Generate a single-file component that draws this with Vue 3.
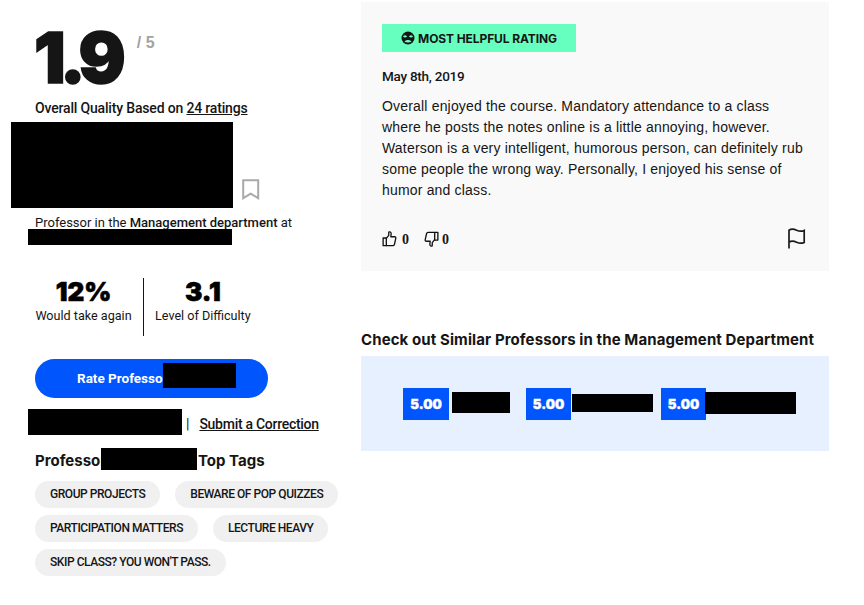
<script setup>
const paragraph = 'Overall enjoyed the course. Mandatory attendance to a class where he posts the notes online is a little annoying, however. Waterson is a very intelligent, humorous person, can definitely rub some people the wrong way. Personally, I enjoyed his sense of humor and class.'

const tags = [
  'GROUP PROJECTS',
  'BEWARE OF POP QUIZZES',
  'PARTICIPATION MATTERS',
  'LECTURE HEAVY',
  "SKIP CLASS? YOU WON'T PASS."
]

const similar = [
  { score: '5.00', scoreWidth: 46, left: 0, width: 58, height: 21, gap: 3 },
  { score: '5.00', scoreWidth: 45, left: 16, width: 81, height: 18, gap: 1 },
  { score: '5.00', scoreWidth: 45, left: 8, width: 91, height: 22, gap: -1 }
]
</script>

<template>
  <div class="page">
    <div class="left">
      <div class="score">
        <span class="score-big">1.9</span>
        <span class="score-max">/ 5</span>
      </div>
      <div class="overall">Overall Quality Based on <a class="link">24 ratings</a></div>

      <div class="name-row">
        <div class="black name-black"></div>
        <svg class="bookmark" width="18" height="21" viewBox="0 0 18 21" fill="none">
          <path d="M1.2 1.2h15v18l-7.5-4.6-7.5 4.6z" stroke="#a9a9a9" stroke-width="2" />
        </svg>
      </div>

      <div class="dept">Professor in the <b>Management department</b> at</div>
      <div class="black school-black"></div>

      <div class="stats">
        <div class="stat first">
          <div class="stat-num">12%</div>
          <div class="stat-label">Would take again</div>
        </div>
        <div class="stat second">
          <div class="stat-num">3.1</div>
          <div class="stat-label">Level of Difficulty</div>
        </div>
      </div>

      <div class="rate-btn">
        <span>Rate Professor</span>
        <div class="black rate-black"></div>
      </div>

      <div class="links">
        <div class="black compare-black"></div>
        <span class="sep">|</span>
        <a class="link correction">Submit a Correction</a>
      </div>

      <div class="tags-title">
        <span>Professor</span>
        <div class="black tags-black"></div>
        <span class="tags-rest">Top Tags</span>
      </div>
      <div class="tags">
        <span v-for="tag in tags" :key="tag" class="tag">{{ tag }}</span>
      </div>
    </div>

    <div class="right">
      <div class="rating-card">
        <div class="badge">
          <svg width="14" height="14" viewBox="0 0 14 14">
            <circle cx="7" cy="7" r="6.5" fill="#151515" />
            <path d="M2 5.4c1-1.6 3-1.6 4 0-.8 1.3-3.1 1.4-4 0zM8 5.4c1-1.6 3-1.6 4 0-.9 1.4-3.2 1.3-4 0z" fill="#66ffbf" />
            <path d="M3.4 10.8c1.5-2.4 5.7-2.4 7.2 0-2 1-5.2 1-7.2 0z" fill="#66ffbf" />
          </svg>
          <span>MOST HELPFUL RATING</span>
        </div>
        <div class="date">May 8th, 2019</div>
        <p class="comment">{{ paragraph }}</p>
        <div class="card-foot">
          <svg class="thumb" width="15" height="16" viewBox="0 0 16 17" fill="none" stroke="#111" stroke-width="1.4" stroke-linejoin="round">
            <path d="M4.6 7.4v8.2H1.2V7.4z" />
            <path d="M4.6 7.8 7.2 4.6V1.5c0-.9 2.4-.9 2.6 1.1l-.4 3.5h4c1 0 1.5.8 1.3 1.7l-1.4 6.3c-.2.8-.7 1.5-1.6 1.5H4.6" />
          </svg>
          <span class="count">0</span>
          <svg class="thumb down" width="15" height="16" viewBox="0 0 16 17" fill="none" stroke="#111" stroke-width="1.4" stroke-linejoin="round">
            <path d="M11.4 9.6V1.4h3.4v8.2z" />
            <path d="M11.4 9.2 8.8 12.4v3.1c0 .9-2.4.9-2.6-1.1l.4-3.5h-4c-1 0-1.5-.8-1.3-1.7l1.4-6.3c.2-.8.7-1.5 1.6-1.5h7.1" />
          </svg>
          <span class="count second-count">0</span>
          <svg class="flag" width="20" height="21" viewBox="0 0 20 21" fill="none" stroke="#1a1a1a" stroke-width="1.7">
            <path d="M2 20.5V2.2c2.4-1.6 5-1.2 7.6 0 2.6 1.2 5 1.4 7.6.2v12c-2.6 1.2-5 1-7.6-.2-2.6-1.2-5.2-1.6-7.6 0" />
          </svg>
        </div>
      </div>

      <h3 class="similar-title">Check out Similar Professors in the Management Department</h3>
      <div class="similar">
        <div
          v-for="(item, i) in similar"
          :key="i"
          class="similar-item"
          :style="{ marginLeft: item.left + 'px' }"
        >
          <div class="similar-score" :style="{ width: item.scoreWidth + 'px' }">{{ item.score }}</div>
          <div
            class="black similar-black"
            :style="{ width: item.width + 'px', height: item.height + 'px', marginLeft: item.gap + 'px' }"
          ></div>
        </div>
      </div>
    </div>
  </div>
</template>

<style>
html, body {
  margin: 0;
  background: #fff;
}
</style>

<style scoped>
.page {
  display: flex;
  width: 864px;
  height: 605px;
  overflow: hidden;
  font-family: "Liberation Sans", Arial, sans-serif;
  color: #151515;
}

.black {
  background: #000;
}

.left {
  width: 361px;
  padding-left: 35px;
  box-sizing: border-box;
  flex-shrink: 0;
  font-family: Roboto, sans-serif;
}

.score {
  display: flex;
  height: 100px;
}

.score-big {
  margin-left: -1px;
  font-family: Inter, sans-serif;
  font-weight: 900;
  font-size: 70px;
  line-height: 116px;
  letter-spacing: -6px;
  -webkit-text-stroke: 1.6px #151515;
  color: #151515;
}

.score-max {
  margin: 35px 0 0 17px;
  font-family: "Liberation Sans", Arial, sans-serif;
  font-size: 16px;
  font-weight: 700;
  line-height: 16px;
  color: #a3a3a3;
}

.overall {
  font-size: 14px;
  font-weight: 500;
  letter-spacing: -0.17px;
  line-height: 16px;
}

.link {
  text-decoration: underline;
  color: #151515;
}

.name-row {
  display: flex;
  align-items: flex-end;
  margin: 6px 0 0 -24px;
}

.name-black {
  width: 222px;
  height: 86px;
}

.bookmark {
  margin: 0 0 8px 9px;
}

.dept {
  margin-top: 7px;
  font-size: 13px;
  line-height: 16px;
}

.dept b {
  font-weight: 500;
}

.school-black {
  width: 204px;
  height: 16px;
  margin: -2px 0 0 -7px;
  position: relative;
}

.stats {
  display: flex;
  margin-top: 33px;
  height: 58px;
}

.stat {
  text-align: center;
  white-space: nowrap;
}

.stat.first {
  width: 109px;
  border-right: 1px solid #151515;
  padding-right: 11px;
  box-sizing: border-box;
}

.stat.second {
  padding-left: 11px;
}

.stat-num {
  font-family: Inter, sans-serif;
  font-weight: 900;
  font-size: 26px;
  line-height: 28px;
  -webkit-text-stroke: 0.6px #000;
  color: #000;
}

.stat-label {
  margin-top: 1px;
  font-size: 12.6px;
  line-height: 18px;
}

.rate-btn {
  position: relative;
  width: 233px;
  height: 39px;
  margin-top: 23px;
  padding-left: 42px;
  box-sizing: border-box;
  border-radius: 20px;
  background: #0055fd;
  color: #fff;
  font-size: 13.5px;
  font-weight: 700;
  line-height: 38px;
}

.rate-black {
  position: absolute;
  left: 128px;
  top: 4px;
  width: 73px;
  height: 25px;
}

.links {
  display: flex;
  align-items: center;
  margin: 11px 0 0 -7px;
}

.compare-black {
  width: 154px;
  height: 26px;
}

.sep {
  margin: 3px 0 0 4px;
  font-size: 14px;
}

.correction {
  margin: 3px 0 0 10px;
  font-size: 14px;
  font-weight: 500;
  letter-spacing: -0.28px;
}

.tags-title {
  display: flex;
  align-items: center;
  position: relative;
  height: 22px;
  padding-top: 2px;
  box-sizing: border-box;
  margin-top: 13px;
  font-family: Inter, sans-serif;
  font-size: 15px;
  font-weight: 700;
}

.tags-black {
  position: absolute;
  left: 66px;
  top: 0;
  width: 96px;
  height: 22px;
}

.tags-rest {
  position: absolute;
  left: 163px;
}

.tags {
  display: flex;
  flex-wrap: wrap;
  gap: 7px 15px;
  width: 310px;
  margin-top: 11px;
}

.tag {
  height: 27px;
  padding: 0 15px;
  border-radius: 14px;
  background: #f0f0f0;
  font-size: 12px;
  font-weight: 500;
  letter-spacing: -0.45px;
  line-height: 27px;
  white-space: nowrap;
}

.right {
  width: 468px;
  flex-shrink: 0;
}

.rating-card {
  height: 269px;
  margin-top: 2px;
  padding: 22px 21px 0;
  box-sizing: border-box;
  background: #f9f9f9;
}

.badge {
  display: flex;
  align-items: center;
  justify-content: center;
  gap: 3px;
  width: 194px;
  height: 28px;
  background: #66ffbf;
  font-family: Inter, sans-serif;
  font-size: 12px;
  font-weight: 700;
  letter-spacing: -0.1px;
}

.date {
  margin-top: 16px;
  font-family: Roboto, sans-serif;
  font-size: 13.5px;
  font-weight: 500;
  letter-spacing: -0.25px;
  line-height: 16px;
}

.comment {
  width: 428px;
  margin: 12px 0 0;
  font-size: 14px;
  letter-spacing: 0.18px;
  line-height: 21px;
}

.card-foot {
  display: flex;
  align-items: center;
  margin-top: 27px;
}

.count {
  margin: 2px 15px 0 5px;
  font-family: "Liberation Serif", serif;
  font-size: 14px;
  font-weight: 700;
}

.second-count {
  margin-left: 3px;
}

.flag {
  margin-left: auto;
  margin-right: 1px;
}

.similar-title {
  margin: 59px 0 0;
  font-family: Inter, sans-serif;
  font-size: 15px;
  font-weight: 700;
  letter-spacing: 0.1px;
  line-height: 20px;
}

.similar {
  display: flex;
  align-items: center;
  height: 95px;
  margin-top: 6px;
  padding-left: 42px;
  box-sizing: border-box;
  background: #e6f0ff;
}

.similar-item {
  display: flex;
  align-items: center;
}

.similar-black {
  margin-bottom: 2px;
}

.similar-score {
  height: 32px;
  background: #0055fd;
  color: #fff;
  font-family: Inter, sans-serif;
  font-size: 13px;
  font-weight: 900;
  -webkit-text-stroke: 0.4px #fff;
  line-height: 32px;
  text-align: center;
}
</style>
